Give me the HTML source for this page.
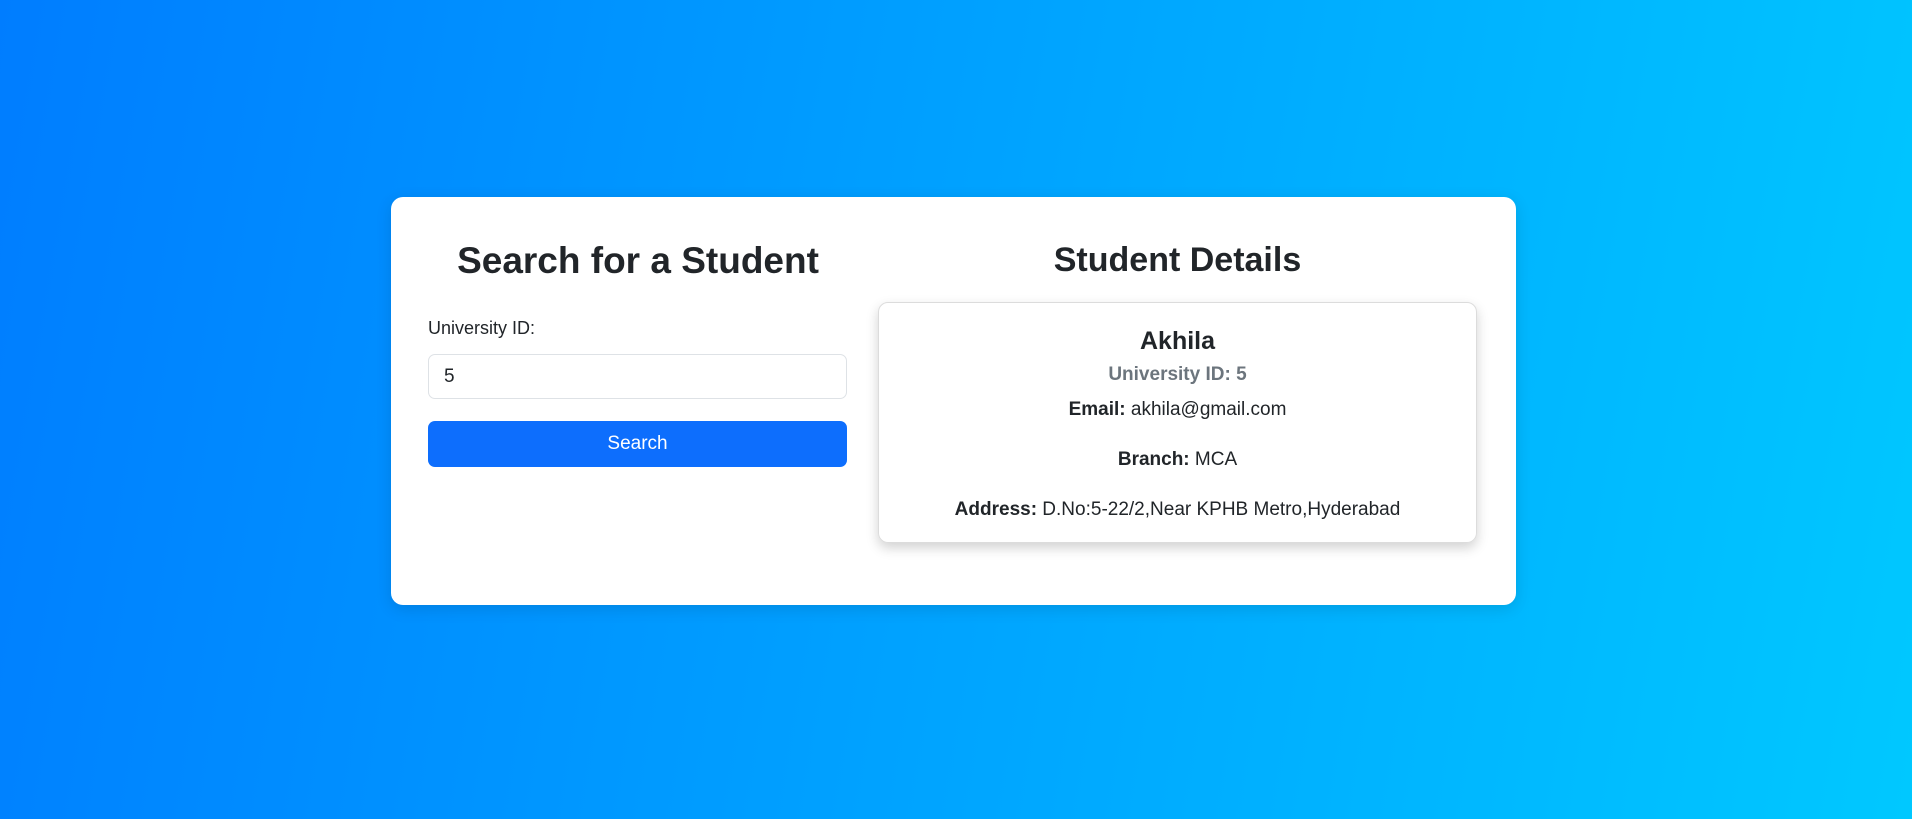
<!DOCTYPE html>
<html><head><style>
html,body{margin:0;padding:0;width:1912px;height:819px;overflow:hidden;font-family:"Liberation Sans",sans-serif;color:#212529}
body{background:linear-gradient(100deg,#007dff 0%,#00c8ff 100%)}
.card{position:absolute;left:391px;top:197px;width:1125px;height:408px;background:#fff;border-radius:12px;box-shadow:0 4px 16px rgba(0,0,0,.12)}
h2{position:absolute;margin:0;font-size:37px;font-weight:bold;text-align:center;line-height:44px}
.lbl{position:absolute;left:37px;top:121px;font-size:18px}
.inp{position:absolute;left:37px;top:157px;border:1px solid #dee2e6;border-radius:7px;font-size:19px;line-height:43px;padding-left:15px;box-sizing:border-box;width:419px;height:45px}
.btn{position:absolute;left:37px;top:224px;width:419px;height:46px;background:#0d6efd;border-radius:7px;color:#fff;font-size:19px;text-align:center;line-height:46px}
.inner{position:absolute;left:487px;top:105px;width:599px;height:241px;border:1px solid #dcdcdc;border-radius:10px;box-shadow:0 5px 12px rgba(0,0,0,.18);box-sizing:border-box;text-align:center}
.inner div{position:absolute;left:0;right:0;font-size:19px}
</style></head><body>
<div class="card">
<h2 style="left:0;width:494px;top:42px">Search for a Student</h2>
<h2 style="left:487px;width:599px;top:41px;font-size:34px">Student Details</h2>
<div class="lbl">University ID:</div>
<div class="inp">5</div>
<div class="btn">Search</div>
<div class="inner">
<div style="top:24px;font-size:25px;font-weight:bold">Akhila</div>
<div style="top:61px;color:#6c757d;font-weight:bold">University ID: 5</div>
<div style="top:96px"><b>Email:</b> akhila@gmail.com</div>
<div style="top:146px"><b>Branch:</b> MCA</div>
<div style="top:196px"><b>Address:</b> D.No:5-22/2,Near KPHB Metro,Hyderabad</div>
</div>
</div>
</body></html>
